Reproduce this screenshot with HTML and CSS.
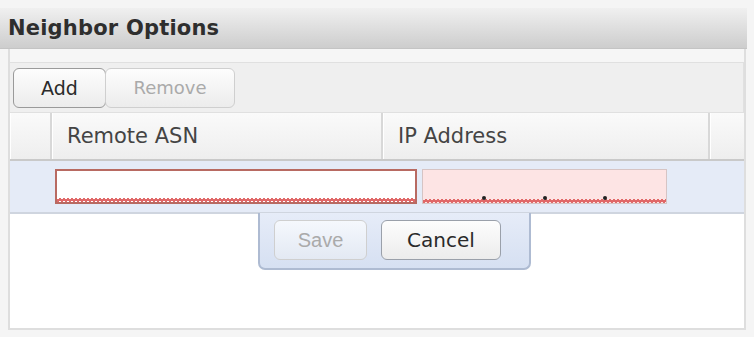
FILE: index.html
```html
<!DOCTYPE html>
<html lang="en">
<head>
    <meta charset="UTF-8">
    <title>Neighbor Options</title>
    <link rel="stylesheet" href="styles.css">
</head>
<body>

<div class="title-bar">Neighbor Options</div>

<div class="panel">
    <div class="toolbar">
        <button class="btn btn-add">Add</button>
        <button class="btn btn-remove" disabled>Remove</button>
    </div>

    <div class="grid-head">
        <div class="col"></div>
        <div class="col">Remote ASN</div>
        <div class="col">IP Address</div>
        <div class="col"></div>
    </div>

    <div class="edit-row">
        <div class="field field-asn"></div>
        <div class="field field-ip">
            <span class="dot"></span>
            <span class="dot"></span>
            <span class="dot"></span>
        </div>

        <div class="edit-actions">
            <button class="btn btn-save" disabled>Save</button>
            <button class="btn btn-cancel">Cancel</button>
        </div>
    </div>

    <div class="grid-body"></div>
</div>

</body>
</html>
```

FILE: styles.css
```css
body {
    margin: 0;
    padding-top: 8px;
    background-color: #f5f5f5;
    font-family: 'DejaVu Sans', sans-serif;
    color: #333;
}
.title-bar {
    width: 747px;
    height: 41px;
    box-sizing: border-box;
    padding: 8px 0 0 8px;
    background: linear-gradient(#f0f0f0, #e0e0e0 45%, #cdcdcd);
    border-bottom: 1px solid #c4c4c4;
    font-size: 21px;
    font-weight: bold;
    color: #2e2e2e;
    letter-spacing: 0.2px;
}
.panel {
    margin-left: 8px;
    width: 738px;
    box-sizing: border-box;
    border: 2px solid #dedede;
    border-top: none;
    background-color: #f6f6f6;
    padding-top: 13px;
}
.toolbar {
    display: flex;
    align-items: center;
    height: 51px;
    box-sizing: border-box;
    padding-left: 3px;
    background-color: #efefef;
    border: 1px solid #e0e0e0;
    border-left: none;
}
.btn {
    font-family: 'DejaVu Sans', sans-serif;
    font-size: 19px;
    height: 40px;
    border-radius: 6px;
    background: linear-gradient(#fdfdfd, #ececec);
    border: 1px solid #a4a4a4;
    color: #333;
    padding: 0;
}
.btn:disabled {
    color: #aaa;
    border-color: #cfcfcf;
}
.btn-add {
    width: 93px;
    border-color: #9a9a9a;
    color: #2a2a2a;
}
.btn-remove {
    width: 130px;
    margin-left: -1px;
    font-size: 18px;
}
.grid-head {
    display: grid;
    grid-template-columns: 42px 331px 327px 1fr;
    height: 48px;
    box-sizing: border-box;
    background: linear-gradient(#fafafa, #eeeeee);
    border-bottom: 2px solid #c9c9c9;
}
.grid-head .col {
    display: flex;
    align-items: center;
    padding-left: 15px;
    font-size: 21px;
    color: #444;
    border-right: 2px solid #d8d8d8;
    box-shadow: inset 1px 0 0 #fff;
}
.grid-head .col:first-child {
    padding-left: 0;
}
.grid-head .col:last-child {
    border-right: none;
}
.edit-row {
    position: relative;
    display: flex;
    height: 53px;
    box-sizing: border-box;
    padding: 8px 0 0 45px;
    background-color: #e5ebf7;
    border-bottom: 2px solid #cfd5df;
}
.field {
    position: relative;
    height: 35px;
    box-sizing: border-box;
}
.field::after {
    content: "";
    position: absolute;
    left: 0;
    right: 0;
    bottom: 0;
    height: 4px;
    background:
        linear-gradient(135deg, transparent 35%, #e06868 35%, #e06868 65%, transparent 65%) 0 0 / 4px 4px,
        linear-gradient(45deg, transparent 35%, #e06868 35%, #e06868 65%, transparent 65%) 2px 0 / 4px 4px;
}
.field-asn {
    width: 362px;
    background-color: #fff;
    border: 2px solid #b86a62;
}
.field-ip {
    width: 245px;
    margin-left: 5px;
    background-color: #fde4e4;
    border: 1px solid #d6c4c4;
    display: flex;
    justify-content: space-between;
    padding: 0 59px;
}
.dot {
    margin-top: 26px;
    width: 4px;
    height: 4px;
    border-radius: 50%;
    background-color: #222;
    z-index: 1;
}
.edit-actions {
    position: absolute;
    top: 52px;
    left: 248px;
    display: flex;
    gap: 14px;
    width: 273px;
    height: 57px;
    box-sizing: border-box;
    padding: 7px 0 0 14px;
    background: linear-gradient(#e6ecf8, #d6e0f2);
    border: 2px solid #aebbd2;
    border-top: none;
    border-radius: 0 0 7px 7px;
}
.btn-save {
    width: 93px;
    font-family: 'Liberation Sans', sans-serif;
    font-size: 20px;
    border-color: #c5ccd8;
    background: linear-gradient(#f5f8fd, #e3e9f3);
}
.btn-cancel {
    width: 120px;
    font-size: 20px;
    color: #2a2a2a;
    border-color: #9aa0aa;
}
.grid-body {
    height: 114px;
    background-color: #fff;
}
```
